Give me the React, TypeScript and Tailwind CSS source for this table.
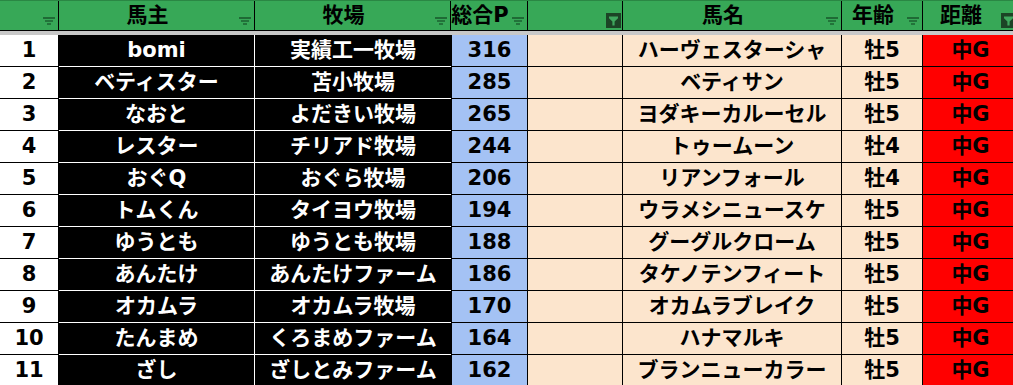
type Row = {
  no: number
  owner: string
  farm: string
  pt: number
  horse: string
  age: string
  dist: string
}

const rows: Row[] = [
  { no: 1, owner: 'bomi', farm: '実績工一牧場', pt: 316, horse: 'ハーヴェスターシャ', age: '牡5', dist: '中G' },
  { no: 2, owner: 'ベティスター', farm: '苫小牧場', pt: 285, horse: 'ベティサン', age: '牡5', dist: '中G' },
  { no: 3, owner: 'なおと', farm: 'よだきい牧場', pt: 265, horse: 'ヨダキーカルーセル', age: '牡5', dist: '中G' },
  { no: 4, owner: 'レスター', farm: 'チリアド牧場', pt: 244, horse: 'トゥームーン', age: '牡4', dist: '中G' },
  { no: 5, owner: 'おぐQ', farm: 'おぐら牧場', pt: 206, horse: 'リアンフォール', age: '牡4', dist: '中G' },
  { no: 6, owner: 'トムくん', farm: 'タイヨウ牧場', pt: 194, horse: 'ウラメシニュースケ', age: '牡5', dist: '中G' },
  { no: 7, owner: 'ゆうとも', farm: 'ゆうとも牧場', pt: 188, horse: 'グーグルクローム', age: '牡5', dist: '中G' },
  { no: 8, owner: 'あんたけ', farm: 'あんたけファーム', pt: 186, horse: 'タケノテンフィート', age: '牡5', dist: '中G' },
  { no: 9, owner: 'オカムラ', farm: 'オカムラ牧場', pt: 170, horse: 'オカムラブレイク', age: '牡5', dist: '中G' },
  { no: 10, owner: 'たんまめ', farm: 'くろまめファーム', pt: 164, horse: 'ハナマルキ', age: '牡5', dist: '中G' },
  { no: 11, owner: 'ざし', farm: 'ざしとみファーム', pt: 162, horse: 'ブランニューカラー', age: '牡5', dist: '中G' },
]

function FilterIcon() {
  return (
    <svg width="13" height="9" viewBox="0 0 13 9" className="absolute right-[2px] bottom-[4px]">
      <rect x="0" y="0" width="12" height="2" fill="#1f6a35" />
      <rect x="2" y="3" width="8" height="2" fill="#22733a" />
      <rect x="4" y="6" width="4" height="2" fill="#22733a" />
    </svg>
  )
}

function ActiveFilter() {
  return (
    <svg width="15" height="15" viewBox="0 0 15 15" className="absolute right-[1px] bottom-[2px]">
      <rect width="15" height="15" fill="#1c4426" />
      <path d="M3 3.5h9v1.8L8.6 8.6V12.5H6.4V8.6L3 5.3z" fill="#3fa85e" />
    </svg>
  )
}

function HeadCell({ w, label, active }: { w: string; label?: string; active?: boolean }) {
  return (
    <div className={`${w} relative h-full border-r border-black flex items-center justify-center pr-[18px]`}>
      {label && <span>{label}</span>}
      {active ? <ActiveFilter /> : <FilterIcon />}
    </div>
  )
}

export default function App() {
  return (
    <div className="w-[1013px] h-[385px] overflow-hidden bg-white font-['DejaVu_Sans','Noto_Sans_CJK_JP',sans-serif] font-bold text-[21px] leading-none">
      <div className="w-[1018px]">
        <div className="flex h-[31px] bg-[#37a857] border-t border-[#2a8744] border-b border-b-black text-black">
          <HeadCell w="w-[59px]" />
          <HeadCell w="w-[196px]" label="馬主" />
          <HeadCell w="w-[196px]" label="牧場" />
          <HeadCell w="w-[77px]" label="総合P" />
          <HeadCell w="w-[95px]" active />
          <HeadCell w="w-[219px]" label="馬名" />
          <HeadCell w="w-[81px]" label="年齢" />
          <HeadCell w="w-[95px]" label="距離" active />
        </div>
        <div className="h-[4px] bg-[#c8c8c8]" />
        {rows.map((r) => (
          <div key={r.no} className="flex h-[32px]">
            <div className="w-[59px] bg-white text-black border-r border-b border-black flex items-center justify-center">{r.no}</div>
            <div className="w-[196px] bg-black text-white border-r border-b border-white flex items-center justify-center">{r.owner}</div>
            <div className="w-[196px] bg-black text-white border-b border-white flex items-center justify-center">{r.farm}</div>
            <div className="w-[77px] bg-[#a4c2f4] text-black border-l border-r border-b border-black flex items-center justify-center">{r.pt}</div>
            <div className="w-[95px] bg-[#fce5cd] border-r border-b border-black" />
            <div className="w-[219px] bg-[#fce5cd] text-black border-r border-b border-black flex items-center justify-center">{r.horse}</div>
            <div className="w-[81px] bg-[#fce5cd] text-black border-r border-b border-black flex items-center justify-center">{r.age}</div>
            <div className="w-[95px] bg-[#ff0000] text-black border-b border-black flex items-center justify-center">{r.dist}</div>
          </div>
        ))}
      </div>
    </div>
  )
}
